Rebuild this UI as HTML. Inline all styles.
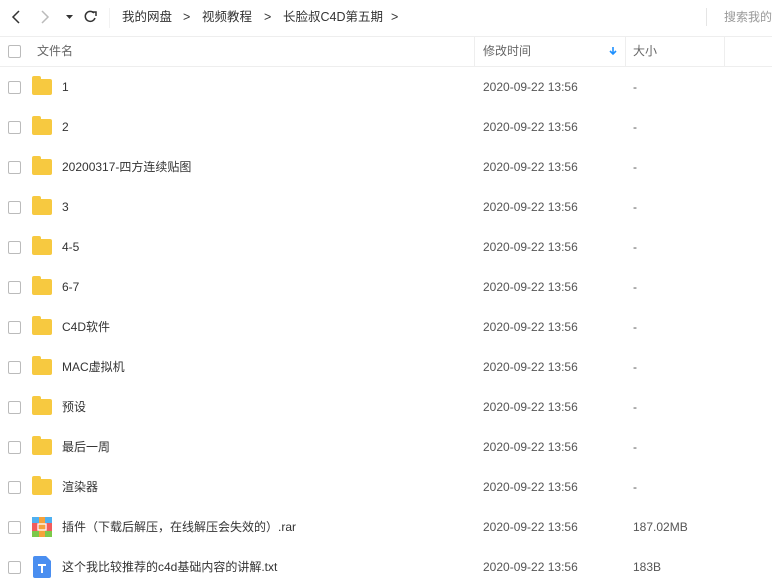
<!DOCTYPE html>
<html><head><meta charset="utf-8"><style>
body{margin:0;width:772px;height:582px;overflow:hidden;background:#fff;font-family:"Liberation Sans","Noto Sans CJK SC",sans-serif;font-size:12px;color:#333;position:relative;line-height:14px}
.a{position:absolute;white-space:nowrap}
.cb{position:absolute;left:8px;width:11px;height:11px;border:1px solid #bbb;border-radius:2px;background:#fff}
.row{position:absolute;left:0;width:772px;height:40px}
.row .cb{top:14px}
.nm,.dt,.sz{position:absolute;top:13px;height:14px;line-height:14px;white-space:nowrap}
.nm{left:62px;color:#333}
.dt{left:483px;color:#555}
.sz{left:633px;color:#555}
.fd{position:absolute;left:32px;top:12px;width:20px;height:16px;background:#f7c940;border-radius:2px}
.fd:before{content:"";position:absolute;left:0;top:-3px;width:9px;height:5px;background:#f7c940;border-radius:2px 2px 0 0}
.bc{position:absolute;top:10px;height:14px;line-height:14px;color:#333;font-size:12.5px;white-space:nowrap}
</style></head><body>
<div class="a" style="left:0;top:0;width:772px;height:36px;border-bottom:1px solid #eee"></div>
<svg class="a" style="left:0;top:0" width="110" height="36">
<path d="M19 11 L13 17 L19 23" stroke="#333" stroke-width="1.5" fill="none"/>
<path d="M42 11 L48 17 L42 23" stroke="#bbb" stroke-width="1.5" fill="none"/>
<path d="M66 15 L73 15 L69.5 19Z" fill="#333"/>
<path d="M94 13 A5 5 0 1 0 95 18" stroke="#333" stroke-width="1.5" fill="none"/>
<path d="M92 12 L96 12 L96 16" stroke="#333" stroke-width="1.5" fill="none"/>
<line x1="110" y1="8" x2="110" y2="28" stroke="#e5e5e5"/>
</svg>
<div class="bc" style="left:122px">我的网盘</div>
<div class="bc" style="left:183px">&gt;</div>
<div class="bc" style="left:202px">视频教程</div>
<div class="bc" style="left:264px">&gt;</div>
<div class="bc" style="left:283px">长脸叔C4D第五期</div>
<div class="bc" style="left:391px">&gt;</div>
<div class="a" style="left:706px;top:8px;width:1px;height:18px;background:#e5e5e5"></div>
<div class="a" style="left:724px;top:10px;color:#999;font-size:12px">搜索我的</div>
<div class="a" style="left:0;top:66px;width:772px;height:1px;background:#eee"></div>
<div class="a" style="left:474px;top:37px;width:1px;height:29px;background:#eee"></div>
<div class="a" style="left:625px;top:37px;width:1px;height:29px;background:#eee"></div>
<div class="a" style="left:724px;top:37px;width:1px;height:29px;background:#eee"></div>
<div class="cb" style="top:45px"></div>
<div class="a" style="left:37px;top:44px;color:#666">文件名</div>
<div class="a" style="left:483px;top:44px;color:#666">修改时间</div>
<svg class="a" style="left:609px;top:46px" width="8" height="10"><path d="M4 1V8M1 5L4 8L7 5" stroke="#1e90ff" stroke-width="1.6" fill="none"/></svg>
<div class="a" style="left:633px;top:44px;color:#666">大小</div>

<div class="row" style="top:67px"><div class="cb"></div><div class="fd"></div><div class="nm">1</div><div class="dt">2020-09-22 13:56</div><div class="sz">-</div></div>
<div class="row" style="top:107px"><div class="cb"></div><div class="fd"></div><div class="nm">2</div><div class="dt">2020-09-22 13:56</div><div class="sz">-</div></div>
<div class="row" style="top:147px"><div class="cb"></div><div class="fd"></div><div class="nm">20200317-四方连续贴图</div><div class="dt">2020-09-22 13:56</div><div class="sz">-</div></div>
<div class="row" style="top:187px"><div class="cb"></div><div class="fd"></div><div class="nm">3</div><div class="dt">2020-09-22 13:56</div><div class="sz">-</div></div>
<div class="row" style="top:227px"><div class="cb"></div><div class="fd"></div><div class="nm">4-5</div><div class="dt">2020-09-22 13:56</div><div class="sz">-</div></div>
<div class="row" style="top:267px"><div class="cb"></div><div class="fd"></div><div class="nm">6-7</div><div class="dt">2020-09-22 13:56</div><div class="sz">-</div></div>
<div class="row" style="top:307px"><div class="cb"></div><div class="fd"></div><div class="nm">C4D软件</div><div class="dt">2020-09-22 13:56</div><div class="sz">-</div></div>
<div class="row" style="top:347px"><div class="cb"></div><div class="fd"></div><div class="nm">MAC虚拟机</div><div class="dt">2020-09-22 13:56</div><div class="sz">-</div></div>
<div class="row" style="top:387px"><div class="cb"></div><div class="fd"></div><div class="nm">预设</div><div class="dt">2020-09-22 13:56</div><div class="sz">-</div></div>
<div class="row" style="top:427px"><div class="cb"></div><div class="fd"></div><div class="nm">最后一周</div><div class="dt">2020-09-22 13:56</div><div class="sz">-</div></div>
<div class="row" style="top:467px"><div class="cb"></div><div class="fd"></div><div class="nm">渲染器</div><div class="dt">2020-09-22 13:56</div><div class="sz">-</div></div>
<div class="row" style="top:507px"><div class="cb"></div>
<svg class="a" style="left:32px;top:10px" width="20" height="20"><rect width="20" height="20" rx="2" fill="#f25c5c"/><rect width="20" height="6" fill="#4fb0f0"/><rect y="14" width="20" height="6" fill="#7cc94a"/><rect x="7" width="6" height="20" fill="#f5a23a"/><rect x="6" y="7" width="8" height="6" fill="none" stroke="#fff" stroke-width="1.3"/></svg>
<div class="nm">插件（下载后解压，在线解压会失效的）.rar</div><div class="dt">2020-09-22 13:56</div><div class="sz">187.02MB</div></div>
<div class="row" style="top:547px"><div class="cb"></div>
<svg class="a" style="left:33px;top:9px" width="18" height="22"><path d="M2 0H13L18 5V20a2 2 0 0 1-2 2H2a2 2 0 0 1-2-2V2a2 2 0 0 1 2-2Z" fill="#4a8ef0"/><path d="M5 9H13M9 9V17" stroke="#fff" stroke-width="2"/></svg>
<div class="nm">这个我比较推荐的c4d基础内容的讲解.txt</div><div class="dt">2020-09-22 13:56</div><div class="sz">183B</div></div>
</body></html>
